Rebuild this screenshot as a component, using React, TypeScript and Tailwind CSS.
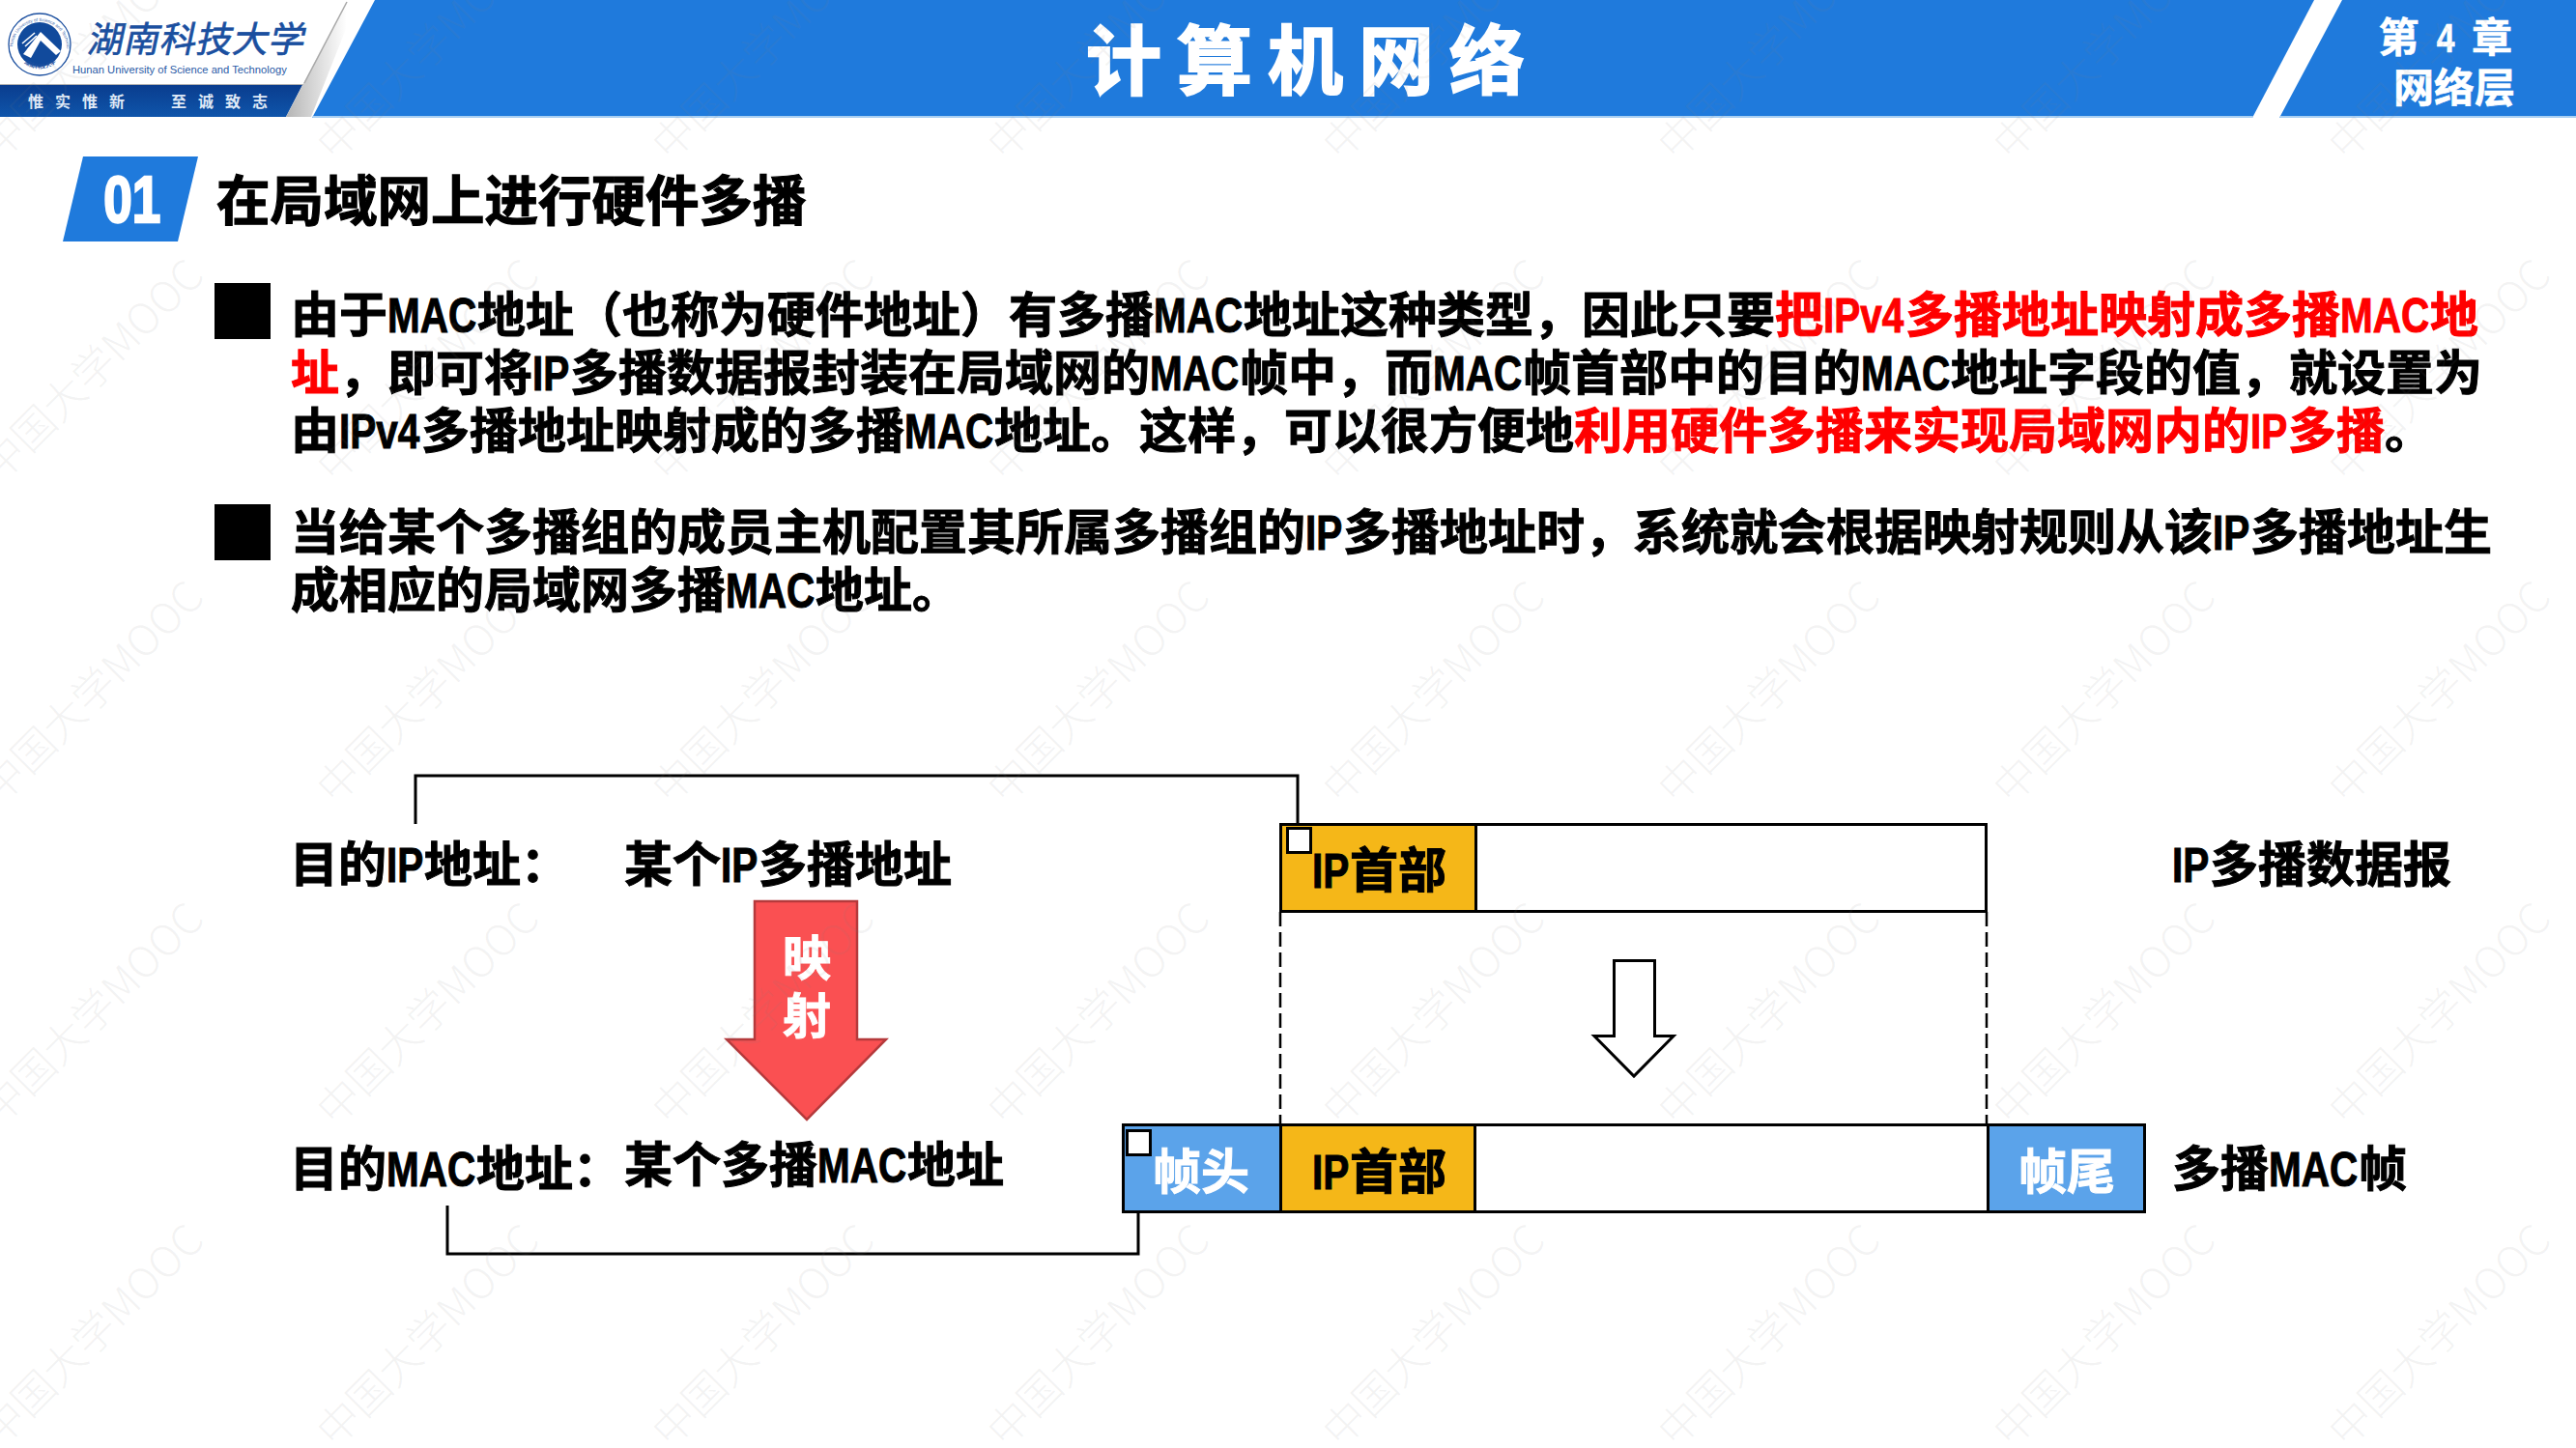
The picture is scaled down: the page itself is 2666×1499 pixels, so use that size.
import React from "react";

const marks = Array.from({ length: 40 }, (_, i) => i);

// latin runs in the slide are a condensed face, so squeeze Liberation into a fixed slot
const Narrow: React.FC<{ slot: string; children: React.ReactNode }> = ({ slot, children }) => (
  <span className={`inline-block leading-none ${slot}`}>
    <span className="inline-block leading-none origin-left scale-x-[.81] [font-family:'Liberation_Sans',sans-serif]">
      {children}
    </span>
  </span>
);
const MAC = () => <Narrow slot="w-[93px]">MAC</Narrow>;
const IP = () => <Narrow slot="w-[39px]">IP</Narrow>;
const IPv4 = () => <Narrow slot="w-[85px]">IPv4</Narrow>;

const Emblem: React.FC = () => (
  <svg className="ml-[8px] mt-[13px] shrink-0" width="66" height="66" viewBox="8 13 66 66">
    <defs>
      <path id="ringTop" d="M 13 50 A 28 28 0 1 1 69 50" />
      <path id="ringBottom" d="M 16 52 A 26 26 0 0 0 66 52" />
    </defs>
    <circle cx="41" cy="46" r="32" fill="#fff" stroke="#1b4f9f" strokeWidth="1.3" />
    <circle cx="41" cy="46" r="23" fill="#114a9c" />
    <text fontSize="4.6" fill="#3a68ad" fontFamily="Liberation Sans">
      <textPath href="#ringTop" startOffset="2%">Hunan University of Science and Technology</textPath>
    </text>
    <text fontSize="6" fill="#1b4f9f" fontWeight="700" fontFamily="Noto Sans CJK SC">
      <textPath href="#ringBottom" startOffset="24%">湖南科技大学</textPath>
    </text>
    <path d="M42 33 L63 53 L58 57 L42 42 L32 60 L24 56 Z" fill="#fff" />
    <path d="M23 45 L36 34 M26 48 L38 37 M29 51 L39 40" stroke="#fff" strokeWidth="1.6" />
  </svg>
);

const Logo: React.FC = () => (
  <div className="relative w-[323px] h-[121px] shrink-0 flex flex-col">
    <div className="flex h-[87px]">
      <Emblem />
      <div className="ml-[1px] flex flex-col">
        <div className="pl-[18px] mt-[13px] h-[50px] text-[37px] leading-[50px] tracking-[0.5px] text-[#1a4f9f] skew-x-[-12deg] [-webkit-text-stroke:0.7px] whitespace-nowrap">
          湖南科技大学
        </div>
        <div className="mt-[3px] text-[11.2px] leading-[12px] text-[#2a5ba6] [font-family:'Liberation_Sans',sans-serif] whitespace-nowrap">
          Hunan University of Science and Technology
        </div>
      </div>
    </div>
    <div className="h-[1px] w-[314px] bg-[#b0b0b0]"></div>
    <div className="h-[33px] w-[313px] flex items-center pl-[29px] pb-[2px] gap-[36px] bg-linear-to-b from-[#0a3d8e] to-[#0f55ab] [clip-path:polygon(0_0,100%_0,296px_100%,0_100%)] text-[16px] font-bold tracking-[12px] text-[#dfe9f6] whitespace-nowrap">
      <span>惟实惟新</span>
      <span>至诚致志</span>
    </div>
    <svg className="absolute left-0 top-0 z-10" width="365" height="121" viewBox="0 0 365 121">
      <defs>
        <linearGradient id="logoShade" x1="0" x2="1" y1="0" y2="0">
          <stop offset="0" stopColor="#b5b5b5" />
          <stop offset="1" stopColor="#ffffff" />
        </linearGradient>
      </defs>
      <polygon points="359,0 296,121 322,121 358,30" fill="url(#logoShade)" />
      <line x1="359" y1="2" x2="315" y2="86" stroke="#a8a8a8" strokeWidth="1.5" />
    </svg>
  </div>
);

const Header: React.FC = () => (
  <header className="flex h-[122px] text-white">
    <Logo />
    <div className="w-[2072px] shrink-0 h-[122px] bg-[#1f7adc] border-b-2 border-[#a9cff2] [clip-path:polygon(65px_0,100%_0,2008px_100%,0_100%)] flex items-center justify-center pb-[4px]">
      <h1 className="text-[78px] leading-none font-bold tracking-[16px] [-webkit-text-stroke:2px_#fff]">计算机网络</h1>
    </div>
    <div className="-ml-[36px] w-[307px] shrink-0 h-[122px] bg-[#1f7adc] border-b-2 border-[#a9cff2] [clip-path:polygon(65px_0,100%_0,100%_100%,0_100%)] flex flex-col items-end justify-center pt-[3px] pr-[63px] font-bold [-webkit-text-stroke:0.6px_#fff]">
      <div className="text-[42px] leading-[52px] tracking-[3px]">
        第 <span className="inline-block scale-x-[.8] leading-none [font-family:'Liberation_Sans',sans-serif]">4</span> 章
      </div>
      <div className="text-[42px] leading-[52px]">网络层</div>
    </div>
  </header>
);

const Bullet: React.FC<{ className?: string }> = ({ className }) => (
  <div className={`w-[58px] h-[58px] bg-black shrink-0 ${className ?? ""}`}></div>
);

const Red: React.FC<{ children: React.ReactNode }> = ({ children }) => (
  <span className="text-[#ff0000]">{children}</span>
);

const Line: React.FC<{ children: React.ReactNode }> = ({ children }) => <div className="h-[60px]">{children}</div>;

const Body: React.FC = () => (
  <section className="pl-[222px] mt-[42px] text-[50px] leading-[60px] font-bold [-webkit-text-stroke:1px] whitespace-nowrap">
    <div className="flex gap-[21px]">
      <Bullet className="mt-[1px]" />
      <div>
        <Line>
          由于<MAC />地址（也称为硬件地址）有多播<MAC />地址这种类型，因此只要
          <Red>把<IPv4 />多播地址映射成多播<MAC />地</Red>
        </Line>
        <Line>
          <Red>址</Red>，即可将<IP />多播数据报封装在局域网的<MAC />帧中，而<MAC />帧首部中的目的<MAC />地址字段的值，就设置为
        </Line>
        <Line>
          由<IPv4 />多播地址映射成的多播<MAC />地址。这样，可以很方便地<Red>利用硬件多播来实现局域网内的<IP />多播</Red>。
        </Line>
      </div>
    </div>
    <div className="flex gap-[21px] mt-[45px]">
      <Bullet className="mt-[5px]" />
      <div>
        <Line>当给某个多播组的成员主机配置其所属多播组的<IP />多播地址时，系统就会根据映射规则从该<IP />多播地址生</Line>
        <Line>成相应的局域网多播<MAC />地址。</Line>
      </div>
    </div>
  </section>
);

const Marker: React.FC<{ className: string }> = ({ className }) => (
  <div className={`absolute w-[27px] h-[28px] bg-white border-[3px] border-black z-10 ${className}`}></div>
);

const Diagram: React.FC = () => (
  <div className="absolute left-0 top-[780px] w-[2666px] h-[719px] text-[50px] leading-[60px] font-bold [-webkit-text-stroke:1px] whitespace-nowrap">
    <svg className="absolute left-0 top-0" width="2666" height="719" viewBox="0 0 2666 719" fill="none">
      <path d="M430 73 V23 H1343 V73" stroke="#000" strokeWidth="3" />
      <path d="M463 468 V518 H1178 V416" stroke="#000" strokeWidth="3" />
      <path d="M1325 164 V384 M2056 164 V384" stroke="#000" strokeWidth="2.5" strokeDasharray="15 6" />
      <path d="M1670.5 214.5 H1712.5 V292.5 H1732 L1691 334 L1650 292.5 H1670.5 Z" fill="#fff" stroke="#000" strokeWidth="3" />
      <path d="M781 153 H887 V296 H917 L835 379 L752 296 H781 Z" fill="#fa5052" stroke="#b53a3c" strokeWidth="2.5" />
    </svg>

    <div className="absolute left-[300px] top-[81px]">目的<IP />地址：</div>
    <div className="absolute left-[646px] top-[81px]">某个<IP />多播地址</div>
    <div className="absolute left-[2248px] top-[81px]"><IP />多播数据报</div>
    <div className="absolute left-[300px] top-[396px]">目的<MAC />地址：</div>
    <div className="absolute left-[646px] top-[392px]">某个多播<MAC />地址</div>
    <div className="absolute left-[2248px] top-[396px]">多播<MAC />帧</div>
    <div className="absolute left-[810px] top-[178px] w-[50px] text-white [-webkit-text-stroke:1px_#fff]">
      <div>映</div>
      <div>射</div>
    </div>

    <div className="absolute left-[1324px] top-[72px] w-[733px] h-[93px] flex border-[3px] border-black bg-white">
      <div className="w-[202px] bg-[#f5b718] border-r-[3px] border-black flex items-center pl-[31px] pb-[3px]">
        <span><IP />首部</span>
      </div>
    </div>
    <Marker className="left-[1331px] top-[76px]" />

    <div className="absolute left-[1161px] top-[383px] w-[1060px] h-[93px] flex border-[3px] border-black bg-white">
      <div className="w-[160px] bg-[#5ba3ea] flex items-center pl-[29px] pb-[2px] text-white [-webkit-text-stroke:1px_#fff]">帧头</div>
      <div className="w-[204px] bg-[#f5b718] border-x-[3px] border-black flex items-center pl-[31px] pb-[2px]">
        <span><IP />首部</span>
      </div>
      <div className="flex-1"></div>
      <div className="w-[162px] bg-[#5ba3ea] border-l-[3px] border-black flex items-center pl-[30px] pb-[2px] text-white [-webkit-text-stroke:1px_#fff]">帧尾</div>
    </div>
    <Marker className="left-[1165px] top-[389px]" />
  </div>
);

export default function App() {
  return (
    <div className="relative w-[2666px] h-[1499px] overflow-hidden bg-white text-black [font-family:'Noto_Sans_CJK_SC',sans-serif]">
      <Header />
      <div className="flex items-center mt-[40px] ml-[65px]">
        <div className="w-[140px] h-[88px] bg-[#1f7adc] [clip-path:polygon(21px_0,100%_0,119px_100%,0_100%)] flex items-center justify-center pl-[3px] text-white font-bold text-[68px] leading-none">
          <span className="inline-block scale-x-[.78] [font-family:'Liberation_Sans',sans-serif] [-webkit-text-stroke:2.5px_#fff]">01</span>
        </div>
        <h2 className="ml-[19px] pb-[2px] text-[55.5px] leading-none font-bold [-webkit-text-stroke:1.2px]">在局域网上进行硬件多播</h2>
      </div>
      <Body />
      <Diagram />

      {/* watermark */}
      <div className="absolute -left-[80px] -top-[119px] grid grid-cols-[repeat(8,347px)] auto-rows-[333px] pointer-events-none z-20 font-normal">
        {marks.map((m) => (
          <div key={m} className="flex items-center justify-center">
            <span className="rotate-[-45deg] whitespace-nowrap text-[44px] leading-none text-[#7f7f7f]/10 [font-weight:300]">
              中国大学MOOC
            </span>
          </div>
        ))}
      </div>
    </div>
  );
}
